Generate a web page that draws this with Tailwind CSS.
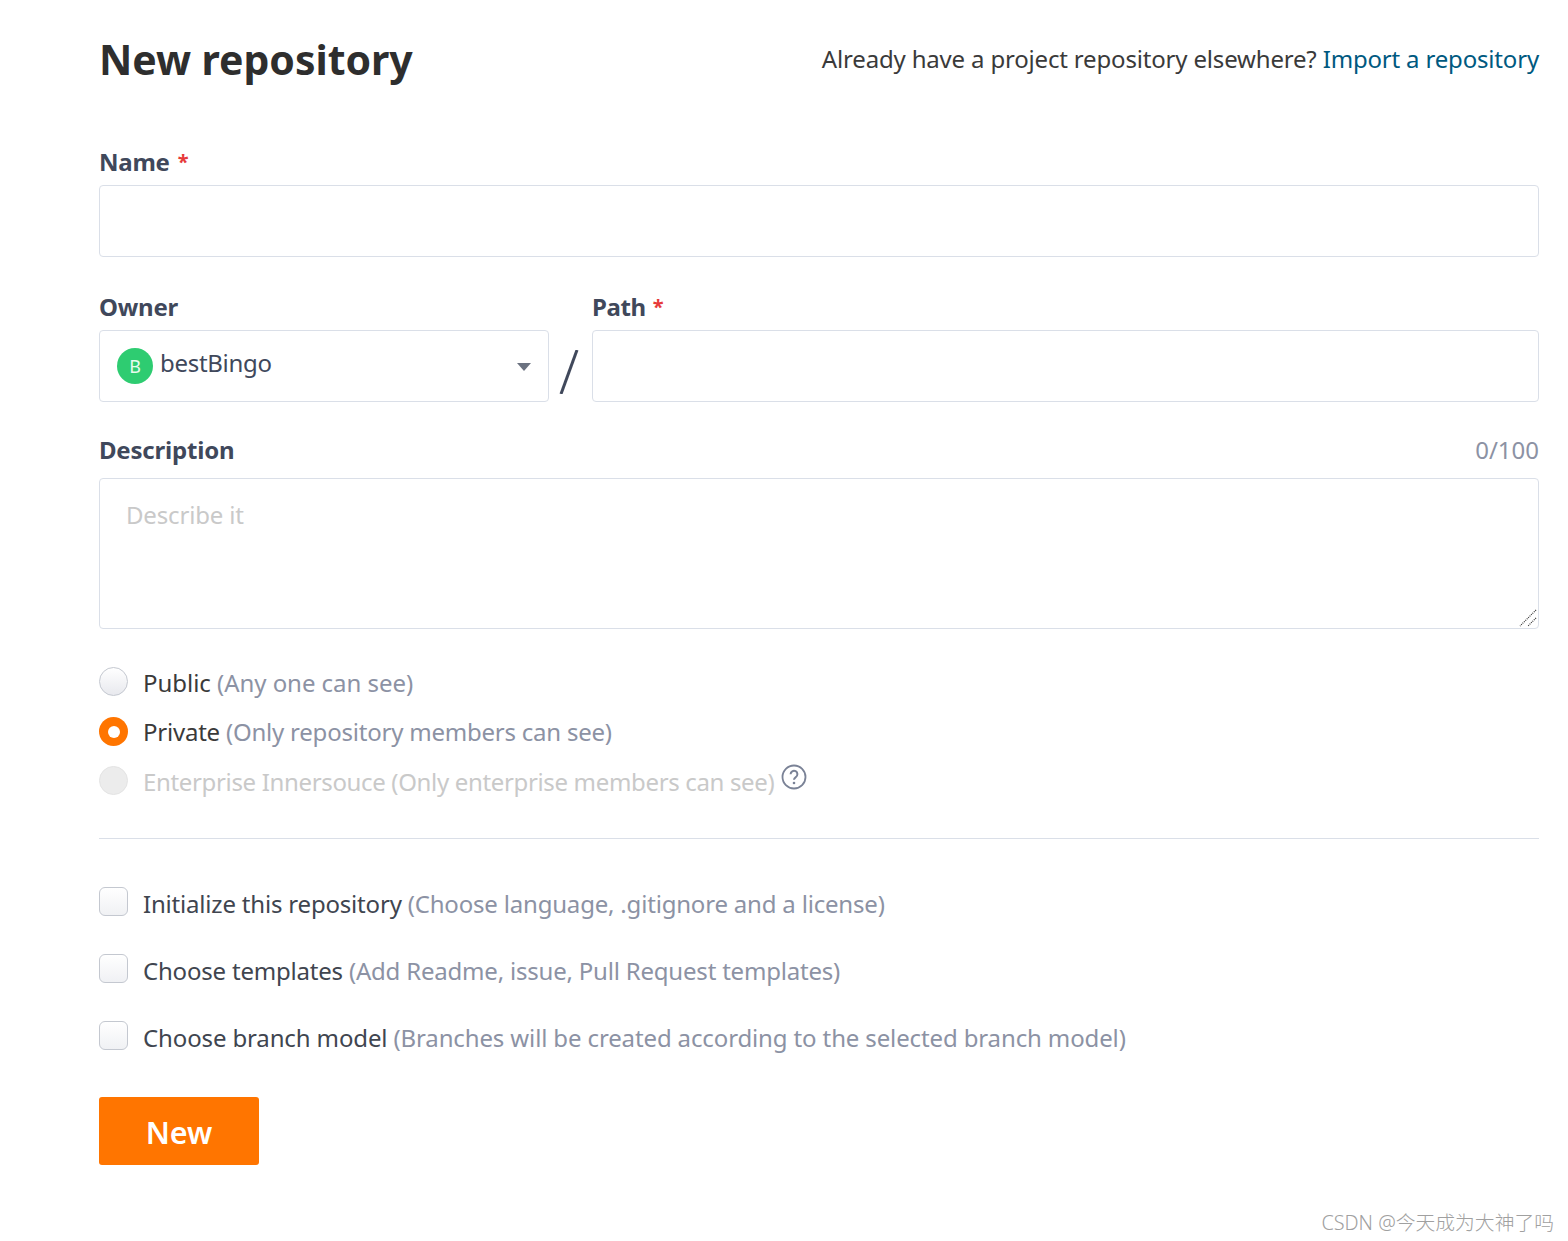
<!doctype html>
<html lang="en">
<head>
    <meta charset="UTF-8">
    <title>New repository</title>
    <script src="https://cdn.jsdelivr.net/npm/@tailwindcss/browser@4"></script>
</head>
<body class="bg-white">
    <div class="relative h-[1241px] overflow-hidden pl-[99px] pr-[29px] font-['Noto_Sans','Open_Sans',sans-serif] text-[#40485b]">
        <div class="flex h-[122px] items-start justify-between pt-[29px]">
            <h1 class="text-[41px] leading-[60px] font-bold tracking-[-0.04px] text-[#2e2e2e]">New repository</h1>
            <p class="pt-[3px] text-[24px] leading-[54px] tracking-[-0.175px] text-[#3a3a3a]">Already have a project repository elsewhere? <a href="#" class="text-[#005980]">Import a repository</a></p>
        </div>

        <form>
            <div class="flex h-[63px] items-center pt-[17px] text-[24px] font-bold tracking-[-0.25px]">
                <label>Name</label><span class="ml-[8px] text-[20px] text-[#e63a3a]">*</span>
            </div>
            <input type="text" class="block h-[72px] w-full rounded-[4px] border border-[#dadfe8] bg-white">

            <div class="mt-[28px] flex">
                <div class="w-[450px]">
                    <label class="block h-[45px] -translate-y-px text-[24px] leading-[45px] font-bold tracking-[-0.25px]">Owner</label>
                    <div class="flex h-[72px] items-center rounded-[4px] border border-[#dadfe8] px-[17px]">
                        <span class="flex h-[36px] w-[36px] items-center justify-center rounded-full bg-[#2ecc71] text-[18px] text-[#e8fbef]">B</span>
                        <span class="ml-[7px] -translate-y-[3px] text-[24px] tracking-[-0.3px]">bestBingo</span>
                        <svg class="ml-auto translate-y-px" width="14" height="8" viewBox="0 0 14 8"><path d="M0 0h14L7 8z" fill="#6b7280"/></svg>
                    </div>
                </div>
                <div class="flex w-[43px] items-end justify-center pb-[8px]">
                    <svg class="-translate-x-[2px]" width="22" height="44" viewBox="0 0 22 44"><path d="M19 0 3 44" stroke="#40485b" stroke-width="3" fill="none"/></svg>
                </div>
                <div class="flex-1">
                    <div class="flex h-[45px] -translate-y-px items-center text-[24px] font-bold tracking-[-0.4px]">
                        <label>Path</label><span class="ml-[7px] text-[20px] text-[#e63a3a]">*</span>
                    </div>
                    <input type="text" class="block h-[72px] w-full rounded-[4px] border border-[#dadfe8] bg-white">
                </div>
            </div>

            <div class="mt-[23px] flex h-[50px] items-center justify-between">
                <label class="text-[24px] font-bold tracking-[-0.2px]">Description</label>
                <span class="text-[24px] text-[#8c92a4]">0/100</span>
            </div>
            <div class="relative mt-[3px]">
                <textarea placeholder="Describe it" class="block h-[151px] w-full resize-none rounded-[4px] border border-[#dadfe8] px-[26px] py-[18px] text-[24px] leading-[36px] tracking-[-0.17px] placeholder:text-[#c9c9c9]"></textarea>
                <svg class="absolute right-[2px] bottom-[2px]" width="18" height="18" viewBox="0 0 18 18" fill="none">
                    <path d="M17 1 1 17M17 9 9 17" stroke="#333" stroke-width="1.2" stroke-dasharray="1 1"/>
                </svg>
            </div>

            <div class="mt-[38px] flex flex-col gap-[21px] text-[24px] leading-[29px]">
                <div class="flex h-[29px] items-center">
                    <span class="h-[29px] w-[29px] shrink-0 rounded-full border border-[#c4c8d0] bg-gradient-to-b from-white to-[#e8e9ee]"></span>
                    <span class="ml-[15px] translate-y-px tracking-[-0.04px] text-[#3a3a3a]">Public <span class="text-[#8c92a4]">(Any one can see)</span></span>
                </div>
                <div class="flex h-[29px] items-center">
                    <span class="flex h-[29px] w-[29px] shrink-0 items-center justify-center rounded-full bg-[#ff7500]"><span class="h-[12px] w-[12px] rounded-full bg-white"></span></span>
                    <span class="ml-[15px] tracking-[-0.22px] text-[#3a3a3a]">Private <span class="text-[#8c92a4]">(Only repository members can see)</span></span>
                </div>
                <div class="flex h-[29px] items-center">
                    <span class="h-[29px] w-[29px] shrink-0 -translate-y-px rounded-full border border-[#e4e4e4] bg-[#ececec]"></span>
                    <span class="ml-[15px] tracking-[-0.34px] text-[#c9c9c9]">Enterprise Innersouce (Only enterprise members can see)</span>
                    <svg class="mb-[10px] ml-[7px]" width="26" height="26" viewBox="0 0 26 26" fill="none">
                        <circle cx="13" cy="13" r="11.5" stroke="#7a8296" stroke-width="1.8"/>
                        <path d="M9.6 10.2a3.4 3.4 0 1 1 5.2 2.9c-1.2.8-1.8 1.3-1.8 2.7" stroke="#7a8296" stroke-width="2"/>
                        <circle cx="13" cy="19" r="1.3" fill="#7a8296"/>
                    </svg>
                </div>
            </div>

            <hr class="mt-[42px] border-[#dadfe8]">

            <div class="mt-[48px] flex flex-col gap-[38px] text-[24px] leading-[29px]">
                <div class="flex h-[29px] items-center">
                    <span class="h-[29px] w-[29px] shrink-0 rounded-[6px] border border-[#c4c8d0] bg-gradient-to-b from-white to-[#f0f1f4]"></span>
                    <span class="ml-[15px] translate-y-[2px] tracking-[-0.19px] text-[#40454f]">Initialize this repository <span class="text-[#8c92a4]">(Choose language, .gitignore and a license)</span></span>
                </div>
                <div class="flex h-[29px] items-center">
                    <span class="h-[29px] w-[29px] shrink-0 rounded-[6px] border border-[#c4c8d0] bg-gradient-to-b from-white to-[#f0f1f4]"></span>
                    <span class="ml-[15px] translate-y-[2px] tracking-[-0.2px] text-[#40454f]">Choose templates <span class="text-[#8c92a4]">(Add Readme, issue, Pull Request templates)</span></span>
                </div>
                <div class="flex h-[29px] items-center">
                    <span class="h-[29px] w-[29px] shrink-0 rounded-[6px] border border-[#c4c8d0] bg-gradient-to-b from-white to-[#f0f1f4]"></span>
                    <span class="ml-[15px] translate-y-[2px] tracking-[-0.13px] text-[#40454f]">Choose branch model <span class="text-[#8c92a4]">(Branches will be created according to the selected branch model)</span></span>
                </div>
            </div>

            <button type="button" class="mt-[47px] block h-[68px] w-[160px] rounded-[3px] bg-[#ff7500] pt-[3px] text-[30.5px] font-semibold text-white">New</button>
        </form>

        <div class="absolute right-[14px] bottom-[4px] font-['Noto_Sans','Noto_Sans_CJK_SC',sans-serif] text-[19.8px] leading-[28px] font-light text-[#a0a0a0]">CSDN @今天成为大神了吗</div>
    </div>
</body>
</html>
